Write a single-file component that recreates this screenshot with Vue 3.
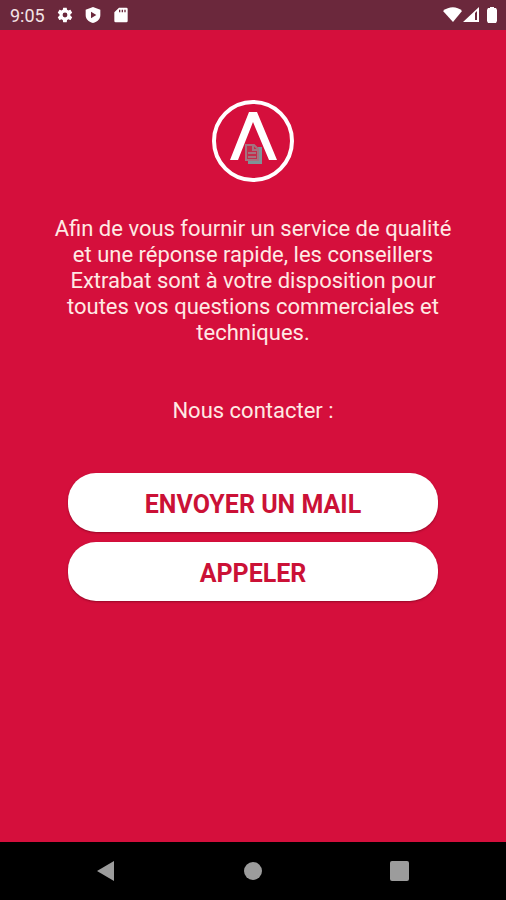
<script setup>
import { ref } from 'vue';

const time = ref('9:05');
const contacts = ref([
  { label: 'ENVOYER UN MAIL', name: 'mail' },
  { label: 'APPELER', name: 'call' },
]);
</script>

<template>
  <div class="screen">
    <header class="status-bar">
      <div class="status-left">
        <span class="time">{{ time }}</span>
        <svg class="status-icon" viewBox="1 1 22 22" aria-hidden="true">
          <path fill-rule="evenodd" d="M19.4 13a7.500 7.500 0 0 0 0-2l2.200-1.700c.2-.2.300-.5.100-.7l-2-3.500c-.1-.2-.4-.3-.6-.2l-2.600 1a7.600 7.600 0 0 0-1.700-1L14.400 2.300c0-.2-.2-.4-.5-.4h-4c-.2 0-.4.200-.5.4L9 4.900c-.6.300-1.200.6-1.700 1l-2.500-1c-.2-.1-.5 0-.6.200l-2 3.500c-.1.200-.1.500.1.600L4.400 11a8 8 0 0 0 0 2l-2.100 1.700c-.2.100-.2.400-.1.600l2 3.500c.1.200.4.300.6.200l2.500-1c.5.400 1.100.7 1.700 1l.4 2.600c.1.300.3.400.5.400h4c.3 0 .5-.1.500-.4l.4-2.600c.6-.3 1.200-.6 1.700-1l2.600 1c.2.100.5 0 .6-.2l2-3.500c.2-.2.100-.5-.1-.6zM12 15.300a3.300 3.300 0 1 1 0-6.600 3.300 3.300 0 0 1 0 6.600z" />
        </svg>
        <svg class="status-icon" viewBox="0 0 24 24" aria-hidden="true">
          <path fill-rule="evenodd" d="M12 0 1 4v8c0 6 4 10 11 12 7-2 11-6 11-12V4zM9 7l8 5-8 5z" />
        </svg>
        <svg class="status-icon" viewBox="0 0 24 24" aria-hidden="true">
          <path fill-rule="evenodd" d="M20 1H9L2 8v13a2 2 0 0 0 2 2h16a2 2 0 0 0 2-2V3a2 2 0 0 0-2-2zM9 4h2v4H9zm4 0h2v4h-2zm4 0h2v4h-2z" />
        </svg>
      </div>
      <div class="status-right">
        <svg width="20" height="18" viewBox="0 0 20 18" aria-hidden="true">
          <path d="M0 5C6 0 14 0 19 5L10 16z" />
        </svg>
        <svg width="17" height="18" viewBox="0 0 17 18" aria-hidden="true">
          <path fill-rule="evenodd" d="M16 1v15H0zM12 7v7h2V5z" />
        </svg>
        <svg class="battery" width="12" height="18" viewBox="0 0 12 18" aria-hidden="true">
          <path d="M4 1h4v1h2l1 2v11l-1 2H2l-1-2V4l1-2h2z" />
        </svg>
      </div>
    </header>

    <main class="content">
      <svg class="logo" viewBox="0 0 82 82" role="img" aria-label="Extrabat">
        <circle cx="41" cy="41" r="39" fill="none" stroke="#fff" stroke-width="4" />
        <path fill="#fff" d="M37 12h8l20 48h-8L41 22 26 60h-8z" />
        <path fill="#7f9296" d="M46 47h4v17H36v-4h10z" />
        <path fill="#c32c4b" stroke="#a5727f" stroke-width="2" d="M34 45h8l4 4v11H34z" />
        <path fill="none" stroke="#a5727f" stroke-width="2" d="M41 45v5h5M36 53h8M36 57h8" />
      </svg>
      <p class="intro">
        Afin de vous fournir un service de qualité et une réponse rapide, les conseillers
        Extrabat sont à votre disposition pour toutes vos questions commerciales et techniques.
      </p>
      <p class="contact-title">Nous contacter :</p>
      <div class="actions">
        <button v-for="contact in contacts" :key="contact.name" type="button" class="contact-btn">
          {{ contact.label }}
        </button>
      </div>
    </main>

    <nav class="nav-bar">
      <button type="button" aria-label="Retour">
        <svg width="20" height="22" viewBox="0 0 20 22"><path d="M18 1v20L1 11z" /></svg>
      </button>
      <button type="button" aria-label="Accueil">
        <svg width="20" height="22" viewBox="0 0 20 22"><circle cx="10" cy="11" r="9" /></svg>
      </button>
      <button type="button" aria-label="Applications">
        <svg width="20" height="22" viewBox="0 0 20 22"><rect x="0" y="1" width="19" height="20" rx="2" /></svg>
      </button>
    </nav>
  </div>
</template>

<style>
body {
  margin: 0;
  background-color: #d50f3c;
}
</style>

<style scoped>
.screen {
  display: flex;
  flex-direction: column;
  min-height: 100vh;
  background-color: #d50f3c;
  color: #ffe9e4;
  font-family: Roboto, "Liberation Sans", sans-serif;
}

.status-bar {
  display: flex;
  justify-content: space-between;
  align-items: center;
  height: 30px;
  padding: 0 8px 0 10px;
  background-color: #6b283c;
  color: #f3e3e6;
}

.status-left {
  display: flex;
  align-items: center;
  gap: 12px;
}

.status-right {
  display: flex;
  align-items: center;
}

.status-bar svg {
  fill: #fff;
}

.time {
  font-size: 18px;
}

.status-icon {
  width: 16px;
  height: 16px;
}

.battery {
  margin-left: 6px;
}

.content {
  display: flex;
  flex: 1;
  flex-direction: column;
  align-items: center;
  padding: 70px 48px 40px;
}

.logo {
  width: 82px;
  height: 82px;
}

.intro,
.contact-title {
  margin: 0;
  font-size: 22px;
  line-height: 26px;
  text-align: center;
}

.intro {
  margin-top: 34px;
}

.contact-title {
  margin-top: 52px;
}

.actions {
  display: flex;
  flex-direction: column;
  gap: 10px;
  box-sizing: border-box;
  width: 100%;
  margin-top: 49px;
  padding: 0 20px;
}

.contact-btn {
  height: 59px;
  padding: 4px 16px 0;
  border: none;
  border-radius: 28px;
  background-color: #fff;
  box-shadow: 0 1px 2px rgba(90, 0, 20, 0.5);
  color: #cb1136;
  font-family: inherit;
  font-size: 25px;
  font-weight: 700;
  cursor: pointer;
}

.nav-bar {
  display: flex;
  justify-content: space-between;
  align-items: center;
  height: 58px;
  padding: 0 19%;
  background-color: #000;
}

.nav-bar button {
  display: flex;
  padding: 0;
  border: none;
  background: none;
  cursor: pointer;
}

.nav-bar svg {
  fill: #9c9c9c;
}
</style>
